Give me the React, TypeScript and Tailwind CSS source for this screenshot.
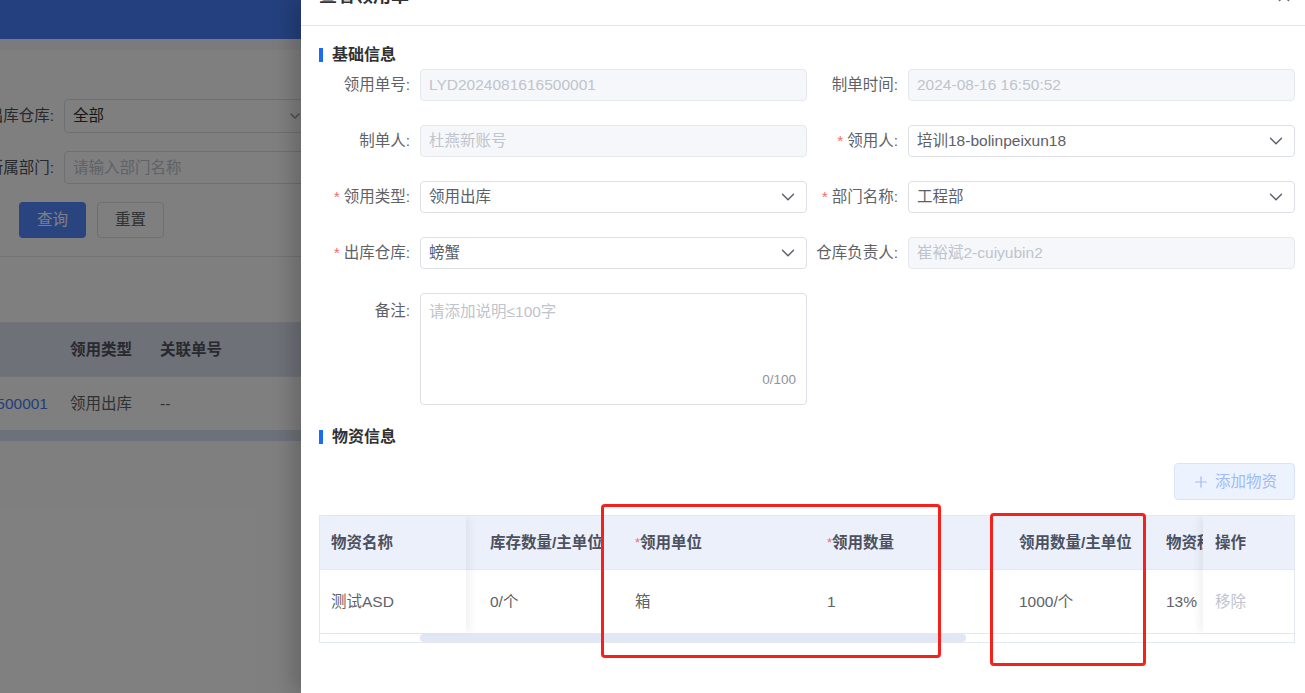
import { ChevronDown, Plus, X } from "lucide-react";

const Req = () => <span className="mr-[4px] text-[#f56c6c]">*</span>;

type FieldProps = {
  label: string;
  value: string;
  required?: boolean;
  disabled?: boolean;
  select?: boolean;
};

const Field = ({ label, value, required, disabled, select }: FieldProps) => (
  <div className="flex h-[32px] items-center">
    <div className="w-[101px] shrink-0 whitespace-nowrap pr-[10px] text-right text-[#606266]">
      {required && <Req />}
      {label}:
    </div>
    <div
      className={
        disabled
          ? "flex h-[32px] flex-1 items-center rounded-[4px] border border-[#e4e7ed] bg-[#f5f7fa] px-[8px] text-[#c0c4cc]"
          : "flex h-[32px] flex-1 items-center rounded-[4px] border border-[#dcdfe6] bg-white px-[8px] text-[#5c6068]"
      }
    >
      <span className="flex-1 whitespace-nowrap">{value}</span>
      {select && <ChevronDown size={22} strokeWidth={1.6} className="-mr-[1px] text-[#5d616b]" />}
    </div>
  </div>
);

const cols = [
  { title: "库存数量/主单位", value: "0/个", w: "w-[157px]", pad: "pl-[24px]" },
  { title: "领用单位", value: "箱", w: "w-[192px]", pad: "pl-[12px]", req: true },
  { title: "领用数量", value: "1", w: "w-[192px]", pad: "pl-[12px]", req: true },
  { title: "领用数量/主单位", value: "1000/个", w: "w-[147px]", pad: "pl-[12px]" },
  { title: "物资税率", value: "13%", w: "w-[120px]", pad: "pl-[12px]" },
];

const BackgroundPage = () => (
  <div className="text-[15.5px] text-[#303133]">
    <div className="h-[39px] bg-[#4880fc]" />
    <div className="h-[11px] bg-[#f6f6fd]" />
    <div className="-ml-[20px] pt-[49px]">
      <div className="flex items-center">
        <div className="flex w-[74px] justify-end whitespace-nowrap text-[#505258]">出库仓库:</div>
        <div className="ml-[10px] flex h-[34px] w-[248px] items-center rounded-[4px] border border-[#dcdfe6] px-[8px]">
          <span className="flex-1">全部</span>
          <ChevronDown size={16} className="text-[#909399]" />
        </div>
      </div>
      <div className="mt-[18px] flex items-center">
        <div className="flex w-[74px] justify-end whitespace-nowrap text-[#505258]">所属部门:</div>
        <div className="ml-[10px] flex h-[33px] w-[260px] items-center rounded-[4px] border border-[#dcdfe6] px-[8px] text-[#c0c4cc]">
          请输入部门名称
        </div>
      </div>
    </div>
    <div className="mt-[18px] flex gap-[11px] pl-[19px]">
      <div className="flex h-[36px] w-[67px] items-center justify-center rounded-[4px] bg-[#5489fe] text-white">查询</div>
      <div className="flex h-[36px] w-[67px] items-center justify-center rounded-[4px] border border-[#dcdfe6] bg-white text-[#606266]">
        重置
      </div>
    </div>
    <div className="mt-[18px] border-t border-[#e4e7ed]" />
    <div className="mt-[65px] flex h-[55px] items-center border-y border-[#e6e9f0] bg-[#dce2f0] font-semibold text-[#505560]">
      <div className="w-[70px]" />
      <div className="w-[90px]">领用类型</div>
      <div>关联单号</div>
    </div>
    <div className="flex h-[53px] items-center text-[#606266]">
      <div className="flex w-[58px] justify-end overflow-hidden whitespace-nowrap pr-[10px] text-[#4a7cf2]">LYD2024081616500001</div>
      <div className="ml-[12px] w-[90px]">领用出库</div>
      <div>--</div>
    </div>
    <div className="h-[11px] bg-[#dae2f4]" />
  </div>
);

export default function App() {
  return (
    <div className="relative h-[693px] w-[1305px] overflow-hidden bg-white font-['Liberation_Sans','Noto_Sans_CJK_SC',sans-serif]">
      <BackgroundPage />
      <div className="absolute inset-0 bg-black/50" />

      <div className="absolute right-0 top-0 flex h-full w-[1004px] flex-col bg-white text-[15.5px] shadow-[-10px_0_18px_rgba(0,0,0,0.18)]">
        <div className="relative h-[26px] overflow-hidden border-b border-[#e4e7ed]">
          <div className="-mt-[16px] pl-[18px] text-[18px] font-semibold leading-[24px] text-[#303133]">查看领用单</div>
          <X size={18} className="absolute -top-[13px] right-[12px] text-[#606266]" />
        </div>

        <div className="pl-[18px] pr-[10px]">
          <div className="mt-[18px] flex h-[22px] items-center">
            <div className="h-[14px] w-[4px] bg-[#1a6cf4]" />
            <div className="ml-[9px] text-[16px] font-semibold text-[#303133]">基础信息</div>
          </div>

          <div className="mt-[3px] grid grid-cols-2 gap-y-[24px]">
            <Field label="领用单号" value="LYD2024081616500001" disabled />
            <Field label="制单时间" value="2024-08-16 16:50:52" disabled />
            <Field label="制单人" value="杜燕新账号" disabled />
            <Field label="领用人" value="培训18-bolinpeixun18" required select />
            <Field label="领用类型" value="领用出库" required select />
            <Field label="部门名称" value="工程部" required select />
            <Field label="出库仓库" value="螃蟹" required select />
            <Field label="仓库负责人" value="崔裕斌2-cuiyubin2" disabled />
            <div className="flex h-[112px]">
              <div className="w-[101px] shrink-0 pr-[10px] pt-[7px] text-right leading-[22px] text-[#606266]">备注:</div>
              <div className="flex flex-1 flex-col rounded-[4px] border border-[#dcdfe6] px-[8px] pb-[14px] pt-[7px]">
                <span className="leading-[22px] text-[#c0c4cc]">请添加说明≤100字</span>
                <span className="mt-auto self-end pr-[2px] text-[13.5px] text-[#909399]">0/100</span>
              </div>
            </div>
          </div>

          <div className="mt-[21px] flex h-[22px] items-center">
            <div className="h-[14px] w-[4px] bg-[#1a6cf4]" />
            <div className="ml-[9px] text-[16px] font-semibold text-[#303133]">物资信息</div>
          </div>

          <div className="mt-[15px] flex justify-end">
            <div className="flex h-[37px] w-[121px] items-center justify-center gap-[5px] rounded-[4px] border border-[#d9e4fb] bg-[#ecf2fe] text-[#a0bbf5]">
              <Plus size={18} strokeWidth={1.6} />
              添加物资
            </div>
          </div>

          <div className="mt-[15px] border border-[#e4e8f0]">
            <div className="flex">
              <div className="relative z-10 w-[146px] shrink-0 bg-white shadow-[6px_0_8px_-2px_rgba(0,0,0,0.06)]">
                <div className="flex h-[54px] items-center border-b border-[#e4e8f0] bg-[#ebf0fa] pl-[11px] font-semibold text-[#4c5060]">
                  物资名称
                </div>
                <div className="flex h-[63px] items-center pl-[11px] text-[#606266]">测试ASD</div>
              </div>

              <div className="flex flex-1 overflow-hidden">
                {cols.map((c) => (
                  <div key={c.title} className={`shrink-0 ${c.w}`}>
                    <div
                      className={`flex h-[54px] items-center overflow-hidden whitespace-nowrap border-b border-[#e4e8f0] bg-[#ebf0fa] font-semibold text-[#4c5060] ${c.pad}`}
                    >
                      {c.req && <span className="text-[13px] font-normal text-[#f56c6c]">*</span>}
                      {c.title}
                    </div>
                    <div className={`flex h-[63px] items-center text-[#606266] ${c.pad}`}>{c.value}</div>
                  </div>
                ))}
              </div>

              <div className="relative z-10 w-[91px] shrink-0 bg-white shadow-[-6px_0_8px_-2px_rgba(0,0,0,0.06)]">
                <div className="flex h-[54px] items-center border-b border-[#e4e8f0] bg-[#ebf0fa] pl-[12px] font-semibold text-[#4c5060]">
                  操作
                </div>
                <div className="flex h-[63px] items-center pl-[12px] text-[#c0c4cc]">移除</div>
              </div>
            </div>
            <div className="h-[9px] border-t border-[#e4e8f0] bg-white">
              <div className="ml-[100px] h-[8px] w-[546px] rounded-full bg-[#e1e7f5]" />
            </div>
          </div>
        </div>
      </div>

      <div className="pointer-events-none absolute left-[601px] top-[504px] h-[154px] w-[340px] rounded-[4px] border-[3px] border-[#f5221b]" />
      <div className="pointer-events-none absolute left-[990px] top-[513px] h-[153px] w-[156px] rounded-[4px] border-[3px] border-[#f5221b]" />
    </div>
  );
}
